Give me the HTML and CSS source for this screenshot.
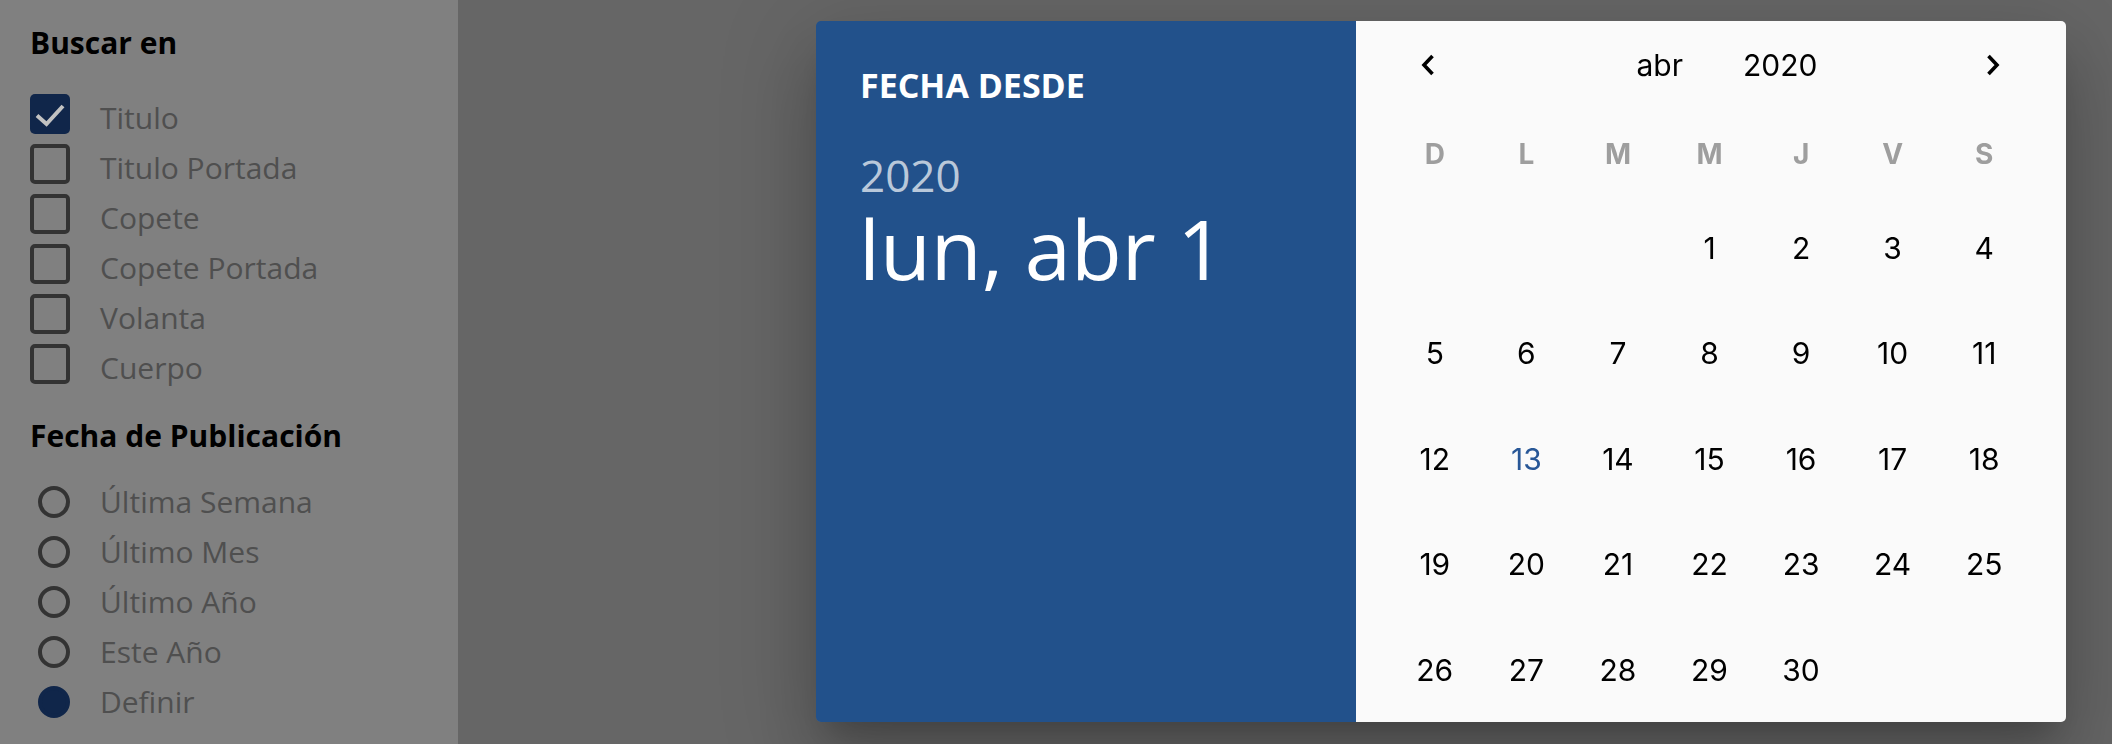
FILE: index.html
```html
<!DOCTYPE html>
<html lang="es">
<head>
<meta charset="utf-8">
<title>Buscar</title>
<link rel="stylesheet" href="styles.css">
</head>
<body>
<div class="page">
  <aside class="sidebar">
    <h3 class="sb-title">Buscar en</h3>
    <ul class="opts">
      <li class="opt"><span class="box checked"><svg class="tick" viewBox="0 0 40 40" width="40" height="40"><path d="M7 21.5 L16.5 30 L33 12" fill="none" stroke="#c2c2c2" stroke-width="4"/></svg></span><span class="lbl">Titulo</span></li>
      <li class="opt"><span class="box"></span><span class="lbl">Titulo Portada</span></li>
      <li class="opt"><span class="box"></span><span class="lbl">Copete</span></li>
      <li class="opt"><span class="box"></span><span class="lbl">Copete Portada</span></li>
      <li class="opt"><span class="box"></span><span class="lbl">Volanta</span></li>
      <li class="opt"><span class="box"></span><span class="lbl">Cuerpo</span></li>
    </ul>
    <h3 class="sb-title second">Fecha de Publicación</h3>
    <ul class="opts radios">
      <li class="opt"><span class="radio-slot"><span class="radio"></span></span><span class="lbl">Última Semana</span></li>
      <li class="opt"><span class="radio-slot"><span class="radio"></span></span><span class="lbl">Último Mes</span></li>
      <li class="opt"><span class="radio-slot"><span class="radio"></span></span><span class="lbl">Último Año</span></li>
      <li class="opt"><span class="radio-slot"><span class="radio"></span></span><span class="lbl">Este Año</span></li>
      <li class="opt"><span class="radio-slot"><span class="radio on"></span></span><span class="lbl">Definir</span></li>
    </ul>
  </aside>
  <main class="main"></main>
</div>

<div class="backdrop">
  <div class="dialog">
    <div class="dlg-head">
      <div class="dh-label">FECHA DESDE</div>
      <div class="dh-year">2020</div>
      <div class="dh-date">lun, abr 1</div>
    </div>
    <div class="cal">
      <div class="cal-nav">
        <span class="nav-btn"><svg viewBox="0 0 14 22" width="14" height="22"><path d="M11.5 2 L3 11 L11.5 20" fill="none" stroke="#000" stroke-width="3.6"/></svg></span>
        <div class="nav-title"><span>abr</span><span>2020</span></div>
        <span class="nav-btn"><svg viewBox="0 0 14 22" width="14" height="22"><path d="M2.5 2 L11 11 L2.5 20" fill="none" stroke="#000" stroke-width="3.6"/></svg></span>
      </div>
      <div class="cal-week">
        <span>D</span><span>L</span><span>M</span><span>M</span><span>J</span><span>V</span><span>S</span>
      </div>
      <div class="cal-days">
        <span></span><span></span><span></span><span>1</span><span>2</span><span>3</span><span>4</span>
        <span>5</span><span>6</span><span>7</span><span>8</span><span>9</span><span>10</span><span>11</span>
        <span>12</span><span class="today">13</span><span>14</span><span>15</span><span>16</span><span>17</span><span>18</span>
        <span>19</span><span>20</span><span>21</span><span>22</span><span>23</span><span>24</span><span>25</span>
        <span>26</span><span>27</span><span>28</span><span>29</span><span>30</span>
      </div>
    </div>
  </div>
</div>
</body>
</html>
```

FILE: styles.css
```css
html, body {
  margin: 0;
  padding: 0;
}
body {
  font-family: "Open Sans", "Liberation Sans", sans-serif;
  background: #666666;
  width: 2112px;
  height: 744px;
  overflow: hidden;
}
.page {
  display: flex;
  height: 744px;
}
.sidebar {
  width: 458px;
  flex: none;
  background: #808080;
  box-sizing: border-box;
  padding: 23px 0 0 30px;
}
.main {
  flex: 1;
  background: #666666;
}
.sb-title {
  margin: 0;
  font-size: 30px;
  line-height: 40px;
  font-weight: 700;
  color: #000;
}
.sb-title.second {
  margin-top: 32px;
}
.opts {
  list-style: none;
  margin: 31px 0 0;
  padding: 0;
}
.opts.radios {
  margin-top: 26px;
}
.opt {
  display: flex;
  align-items: flex-start;
  height: 40px;
}
.opt + .opt {
  margin-top: 10px;
}
.box {
  width: 40px;
  height: 40px;
  flex: none;
  box-sizing: border-box;
  border: 4px solid #333333;
  border-radius: 5px;
}
.box.checked {
  background: #10264a;
  border: none;
}
.tick {
  display: block;
}
.lbl {
  margin-left: 30px;
  font-size: 30px;
  line-height: 40px;
  color: #4f4f4f;
  padding-top: 4px;
  white-space: nowrap;
}
.radios .lbl {
  padding-top: 0;
}
.radio-slot {
  width: 40px;
  height: 40px;
  flex: none;
  display: flex;
  align-items: center;
  justify-content: flex-end;
}
.radio {
  width: 32px;
  height: 32px;
  box-sizing: border-box;
  border: 4px solid #333333;
  border-radius: 50%;
}
.radio.on {
  background: #10264a;
  border-color: #10264a;
}

/* modal */
.backdrop {
  position: fixed;
  inset: 0;
  display: flex;
  align-items: flex-start;
  justify-content: flex-end;
  padding: 21px 46px 0 0;
}
.dialog {
  display: flex;
  width: 1250px;
  height: 701px;
  border-radius: 5px;
  overflow: hidden;
  box-shadow: 0 22px 30px -14px rgba(0,0,0,.2), 0 48px 76px 6px rgba(0,0,0,.14), 0 18px 92px 16px rgba(0,0,0,.12);
}
.dlg-head {
  width: 540px;
  flex: none;
  box-sizing: border-box;
  background: #22518b;
  color: #fff;
  padding: 42px 0 0 43px;
}
.dh-label {
  font-size: 34px;
  line-height: 44px;
  font-weight: 700;
  padding-left: 1px;
}
.dh-year {
  margin-top: 45px;
  font-size: 44px;
  line-height: 46px;
  color: rgba(255,255,255,.7);
  padding-left: 1px;
}
.dh-date {
  font-size: 83px;
  line-height: 100px;
  white-space: nowrap;
}
.cal {
  flex: 1;
  background: #fafafa;
  box-sizing: border-box;
  padding: 0 36px 0 33px;
  font-family: Inter, "Liberation Sans", sans-serif;
  color: #000;
}
.cal-nav {
  height: 88px;
  display: flex;
  align-items: center;
  padding: 0 13px 0 15px;
}
.nav-btn {
  width: 48px;
  height: 48px;
  flex: none;
  display: flex;
  align-items: center;
  justify-content: center;
}
.nav-title {
  flex: 1;
  display: flex;
  justify-content: center;
  gap: 60px;
  padding-left: 33px;
  font-size: 30px;
}
.cal-week {
  display: grid;
  grid-template-columns: repeat(7, 1fr);
  height: 86px;
  box-sizing: border-box;
  padding-top: 4px;
  align-items: center;
  text-align: center;
  font-size: 28px;
  font-weight: 700;
  color: #9e9e9e;
}
.cal-days {
  display: grid;
  grid-template-columns: repeat(7, 1fr);
  grid-auto-rows: 105.5px;
  align-items: center;
  text-align: center;
  font-size: 30px;
}
.cal-days .today {
  color: #285797;
}
```
